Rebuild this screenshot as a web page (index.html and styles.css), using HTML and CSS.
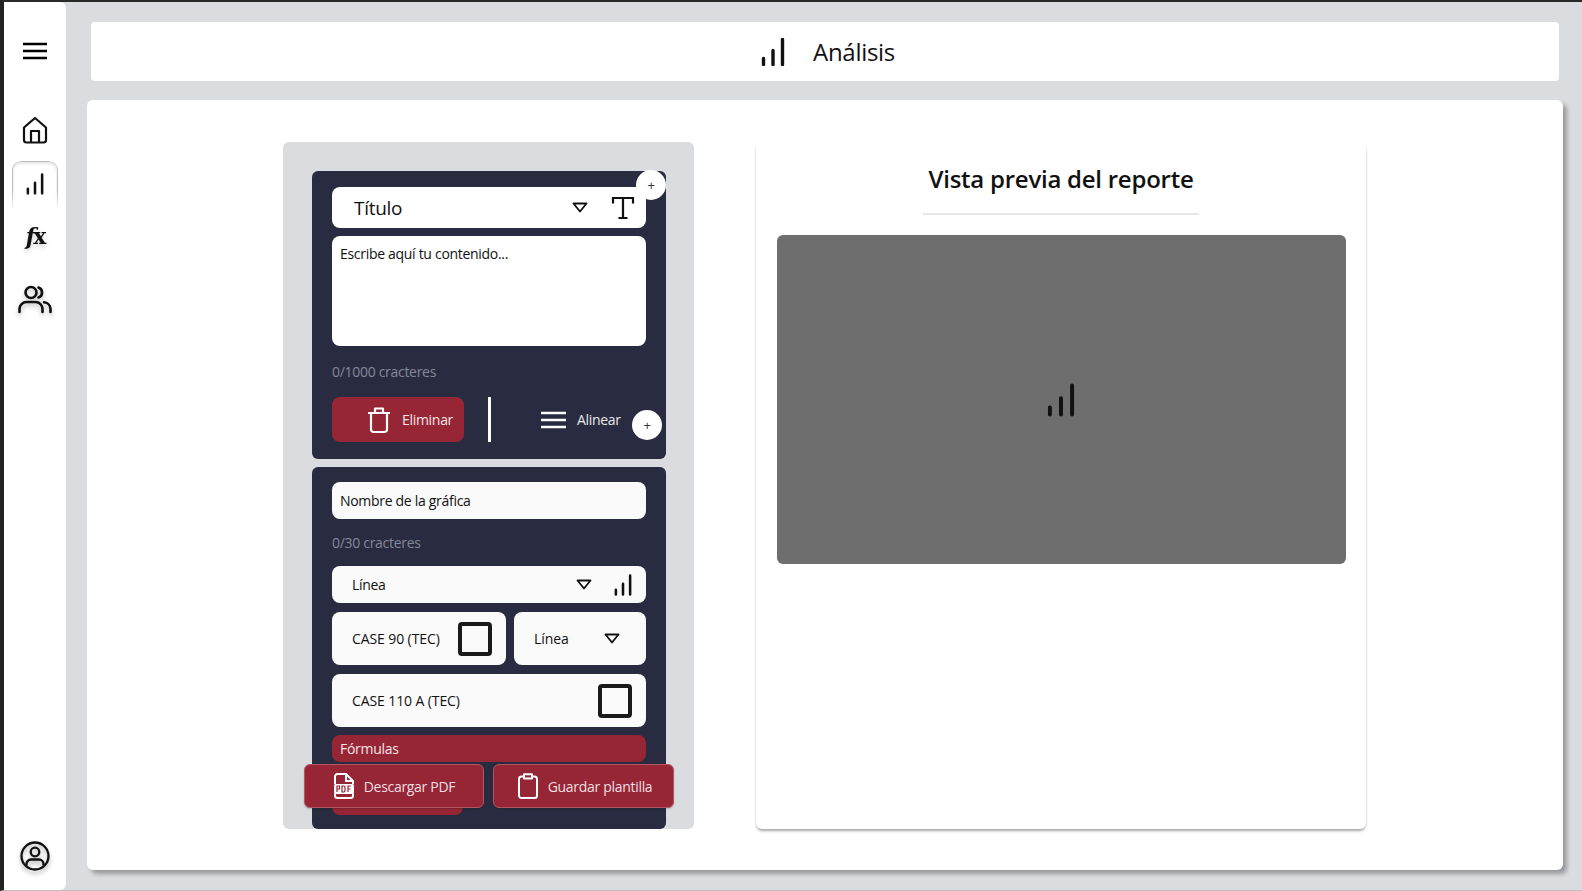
FILE: index.html
```html
<!DOCTYPE html>
<html lang="es">
<head>
<meta charset="utf-8">
<title>Análisis</title>
<link rel="stylesheet" href="styles.css">
</head>
<body>
<svg class="defs" width="0" height="0" aria-hidden="true">
  <symbol id="bars" viewBox="0 0 24 28"><path d="M2.500 26.500v-6M12 26.500V12.500M21.500 26.500V1.500" fill="none" stroke="currentColor" stroke-width="3.400" stroke-linecap="round"/></symbol>
  <symbol id="caret" viewBox="0 0 16 11"><path d="M1.500 1.500h13L8 9.500z" fill="none" stroke="currentColor" stroke-width="1.800" stroke-linejoin="round"/></symbol>
</svg>
<div class="app">
  <nav class="sidebar">
    <svg class="nav-menu" viewBox="0 0 26 18"><path d="M1 2h24M1 9h24M1 16h24" fill="none" stroke="currentColor" stroke-width="2.400"/></svg>
    <div class="nav-items">
      <div class="nav-item nav-home"><svg class="ico-home" viewBox="0 0 26 28"><path d="M2 11.500 13 2l11 9.500V24a2.500 2.500 0 0 1-2.500 2.500h-17A2.500 2.500 0 0 1 2 24zM9 26.500V15h8v11.500" fill="none" stroke="currentColor" stroke-width="2.200" stroke-linejoin="round"/></svg></div>
      <div class="nav-item nav-active"><svg class="ico-bars"><use href="#bars"/></svg></div>
      <div class="nav-item nav-fx"><span class="fx"><span class="fx-f">f</span><span class="fx-x">x</span></span></div>
      <div class="nav-item nav-users"><svg class="ico-users" viewBox="0 0 34 30"><g fill="none" stroke="currentColor" stroke-width="2.600" stroke-linecap="round"><circle cx="13" cy="7.500" r="5.500"/><path d="M1.500 27v-3a7 7 0 0 1 7-7h9a7 7 0 0 1 7 7v3M20.500 2.500a5.300 5.300 0 0 1 0 10M26 17.300a7 7 0 0 1 6.500 6.700v3"/></g></svg></div>
    </div>
    <svg class="nav-user" viewBox="0 0 30 30"><g fill="none" stroke="currentColor" stroke-width="2.300"><circle cx="15" cy="15" r="13.500"/><circle cx="15" cy="11" r="4.300"/><path d="M6.500 24.500V23a4.500 4.500 0 0 1 4.500-4.500h8a4.500 4.500 0 0 1 4.500 4.500v1.500"/></g></svg>
  </nav>
  <div class="content">
    <header class="topbar">
      <svg class="ico-title"><use href="#bars"/></svg>
      <h1 class="topbar-title">Análisis</h1>
    </header>
    <main class="main">
      <section class="editor">
        <div class="card card-text">
          <div class="field field-title">
            <span class="field-label">Título</span>
            <svg class="caret"><use href="#caret"/></svg>
            <svg class="ico-t" viewBox="0 0 24 24"><path d="M2 7.500V2h20v5.500M12 2v20M7.500 22h9" fill="none" stroke="currentColor" stroke-width="2.200"/></svg>
          </div>
          <div class="textarea">Escribe aquí tu contenido...</div>
          <p class="counter counter-text">0/1000 cracteres</p>
          <div class="actions">
            <div class="btn-delete">
              <svg class="ico-trash" viewBox="0 0 24 28"><path d="M1 7h22M8 7V2.500h8V7M4 7v16.500A2.500 2.500 0 0 0 6.500 26h11a2.500 2.500 0 0 0 2.500-2.500V7" fill="none" stroke="currentColor" stroke-width="2.200" stroke-linejoin="round"/></svg>
              <span>Eliminar</span>
            </div>
            <div class="divider"></div>
            <div class="align">
              <svg class="ico-align" viewBox="0 0 25 18"><path d="M0 2h25M0 9h25M0 16h25" fill="none" stroke="currentColor" stroke-width="2.500"/></svg>
              <span>Alinear</span>
            </div>
          </div>
          <span class="fab fab-top">+</span>
          <span class="fab fab-bottom">+</span>
        </div>
        <div class="card card-chart">
          <div class="field field-name">Nombre de la gráfica</div>
          <p class="counter counter-chart">0/30 cracteres</p>
          <div class="field field-type">
            <span class="field-grow">Línea</span>
            <svg class="caret"><use href="#caret"/></svg>
            <svg class="ico-small-bars"><use href="#bars"/></svg>
          </div>
          <div class="row">
            <div class="field field-case field-case-left">
              <span class="field-grow">CASE 90 (TEC)</span>
              <span class="check"></span>
            </div>
            <div class="field field-case field-case-right">
              <span class="field-grow">Línea</span>
              <svg class="caret"><use href="#caret"/></svg>
            </div>
          </div>
          <div class="field field-case">
            <span class="field-grow">CASE 110 A (TEC)</span>
            <span class="check"></span>
          </div>
          <div class="formulas">Fórmulas</div>
          <div class="hidden-btn"></div>
        </div>
        <div class="floating">
          <div class="btn-float">
            <svg class="ico-pdf" viewBox="0 0 22 26"><path d="M2 11V3.500A2.500 2.500 0 0 1 4.500 1H13l7 7v3M2 21v1.500A2.500 2.500 0 0 0 4.500 25h13a2.500 2.500 0 0 0 2.500-2.500V21M13 1v7h7" fill="none" stroke="currentColor" stroke-width="2"/><rect x="1" y="11" width="20" height="10" rx="1.500" fill="currentColor"/><path d="M4 19v-6h2.500v3H4M9 13v6h2l1-1v-4l-1-1zM15 19v-6h3M15 16h2.500" fill="none" stroke="#962635" stroke-width="1.200"/></svg>
            <span>Descargar PDF</span>
          </div>
          <div class="btn-float btn-save">
            <svg class="ico-clip" viewBox="0 0 20 26"><path d="M6 3.500H3.500A2.500 2.500 0 0 0 1 6v16.500A2.500 2.500 0 0 0 3.500 25h13a2.500 2.500 0 0 0 2.500-2.500V6a2.500 2.500 0 0 0-2.500-2.500H14M6 1.200h8v4.300H6z" fill="none" stroke="currentColor" stroke-width="2" stroke-linejoin="round"/></svg>
            <span>Guardar plantilla</span>
          </div>
        </div>
      </section>
      <section class="preview">
        <h2 class="preview-title">Vista previa del reporte</h2>
        <div class="preview-box"><svg class="ico-preview"><use href="#bars"/></svg></div>
      </section>
    </main>
  </div>
</div>
</body>
</html>
```
FILE: styles.css
```css
* { box-sizing: border-box; }
html, body { margin: 0; height: 100%; overflow: hidden; }
body { font-family: "Open Sans", "Noto Sans", sans-serif; color: #111; background: #dcdde1; letter-spacing: -0.3px; }
.defs { position: absolute; }
.app { display: flex; height: 891px; background: #dbdce0; border-left: 4px solid #222; border-top: 2px solid #2a2a2a; border-bottom: 1px solid #bdbdc2; }
.sidebar { width: 62px; background: #fff; border-radius: 0 6px 6px 0; display: flex; flex-direction: column; align-items: center; padding: 40px 0 19px; }
.nav-menu { width: 26px; height: 18px; color: #000; flex: none; margin-bottom: 48px; }
.nav-items { display: flex; flex-direction: column; align-items: center; flex: 1; }
.nav-item { width: 46px; display: flex; align-items: center; justify-content: center; }
.nav-home { height: 44px; }
.ico-home { width: 26px; height: 28px; }
.nav-active { height: 48px; margin-top: 9px; border-radius: 9px 9px 0 0; border: 1px solid #bdbdbd; border-bottom: 0; box-shadow: inset 0 2px 3px rgba(0,0,0,.1); padding-bottom: 3px; -webkit-mask-image: linear-gradient(#000 65%, transparent); mask-image: linear-gradient(#000 65%, transparent); }
.ico-bars { width: 18px; height: 22px; color: #111; }
.nav-fx { height: 44px; margin-top: 5px; }
.fx { font-family: "DejaVu Serif", "Liberation Serif", serif; font-weight: 700; font-size: 22px; line-height: 1; letter-spacing: -2px; filter: drop-shadow(0 3px 2px rgba(0,0,0,.18)); }
.fx-f { font-style: italic; }
.nav-users { height: 40px; margin-top: 22px; }
.ico-users { width: 34px; height: 30px; filter: drop-shadow(0 3px 2px rgba(0,0,0,.25)); }
.nav-user { width: 30px; height: 30px; flex: none; filter: drop-shadow(0 3px 2px rgba(0,0,0,.3)); }
.content { flex: 1; min-width: 0; display: flex; flex-direction: column; }
.topbar { margin: 20px 23px 0 25px; height: 59px; background: #fff; border-radius: 4px; display: flex; align-items: center; justify-content: center; gap: 28px; padding-left: 6px; }
.ico-title { width: 24px; height: 28px; color: #111; }
.topbar-title { margin: 0; font-size: 24px; font-weight: 400; }
.main { margin: 19px 19px 0 21px; height: 770px; background: #fff; border-radius: 6px; box-shadow: 4px 4px 4px rgba(0,0,0,.3); display: flex; align-items: flex-start; gap: 62px; padding: 42px 0 0 196px; }
.editor { position: relative; width: 411px; height: 687px; background: #dbdce0; border-radius: 6px; padding: 29px 28px 0 29px; display: flex; flex-direction: column; gap: 8px; }
.card { background: #292c40; border-radius: 6px; width: 354px; padding: 0 20px; position: relative; display: flex; flex-direction: column; }
.card-text { height: 288px; padding-top: 16px; }
.card-chart { height: 362px; padding-top: 15px; overflow: hidden; gap: 0; }
.field { background: #fafafa; border-radius: 8px; display: flex; align-items: center; font-size: 14px; flex: none; }
.field-title { height: 41px; padding: 0 11px 0 22px; background: #fff; }
.field-label { flex: 1; font-size: 19px; }
.caret { width: 16px; height: 11px; color: #111; flex: none; }
.ico-t { width: 24px; height: 24px; margin-left: 23px; color: #111; }
.textarea { height: 110px; margin-top: 8px; background: #fff; border-radius: 8px; padding: 8px; font-size: 14px; line-height: 20px; }
.counter { margin: 0; color: #85879a; font-size: 14px; line-height: 20px; }
.counter-text { margin-top: 16px; }
.actions { display: flex; align-items: center; margin-top: 15px; height: 45px; }
.btn-delete { width: 132px; height: 45px; background: #962635; color: #f4e3e5; border-radius: 8px; display: flex; align-items: center; font-size: 14px; padding-left: 35px; gap: 11px; }
.ico-trash { width: 24px; height: 28px; color: #fff; }
.divider { width: 3px; height: 45px; background: #fff; margin-left: 24px; }
.align { display: flex; align-items: center; gap: 11px; margin-left: 50px; color: #e8e8ec; font-size: 14px; }
.ico-align { width: 25px; height: 18px; color: #fff; }
.fab { position: absolute; width: 30px; height: 30px; border-radius: 50%; background: #fff; color: #333; font-size: 13px; display: flex; align-items: center; justify-content: center; }
.fab-top { top: -1px; right: 0; }
.fab-bottom { top: 239px; right: 4px; }
.field-name { height: 37px; padding: 0 8px; }
.counter-chart { margin-top: 14px; }
.field-type { height: 37px; margin-top: 13px; padding: 0 14px 0 20px; }
.field-grow { flex: 1; white-space: nowrap; }
.ico-small-bars { width: 18px; height: 22px; margin-left: 22px; color: #111; }
.row { display: flex; gap: 8px; margin-top: 9px; }
.field-case { height: 53px; padding: 0 14px 0 20px; margin-top: 9px; letter-spacing: -0.1px; }
.row .field-case { margin-top: 0; }
.field-case-left { width: 174px; }
.field-case-right { width: 132px; padding-right: 26px; }
.check { width: 34px; height: 34px; border: 4px solid #1a1a1a; border-radius: 4px; flex: none; }
.formulas { height: 27px; margin-top: 8px; background: #962635; color: #f4e3e5; border-radius: 8px; padding: 0 8px; font-size: 14px; line-height: 27px; flex: none; }
.hidden-btn { width: 131px; height: 45px; margin-top: 8px; background: #962635; border-radius: 8px; flex: none; }
.floating { position: absolute; left: 21px; top: 622px; display: flex; gap: 9px; }
.btn-float { width: 180px; height: 44px; background: #962635; border: 1px solid #b65562; border-radius: 6px; color: #f0dfe2; display: flex; align-items: center; justify-content: center; gap: 9px; font-size: 14px; box-shadow: 0 1px 2px rgba(0,0,0,.2); }
.btn-save { width: 181px; gap: 10px; padding-left: 3px; }
.ico-pdf { width: 22px; height: 26px; color: #fff; }
.ico-clip { width: 20px; height: 26px; color: #fff; }
.preview { width: 610px; height: 683px; margin-top: 4px; background: #fff; border-radius: 0 0 6px 6px; box-shadow: 0 3px 3px -1px rgba(0,0,0,.35), 1px 0 1px rgba(0,0,0,.06), -1px 0 1px rgba(0,0,0,.06); padding: 0 20px; display: flex; flex-direction: column; align-items: center; }
.preview-title { margin: 0; width: 276px; height: 69px; border-bottom: 2px solid #e6e6e6; text-align: center; font-size: 24px; font-weight: 600; line-height: 66px; white-space: nowrap; letter-spacing: -0.25px; }
.preview-box { width: 569px; height: 329px; margin-top: 20px; background: #6e6e6e; border-radius: 6px; display: flex; align-items: center; justify-content: center; }
.ico-preview { width: 28px; height: 34px; color: #111; }
```
